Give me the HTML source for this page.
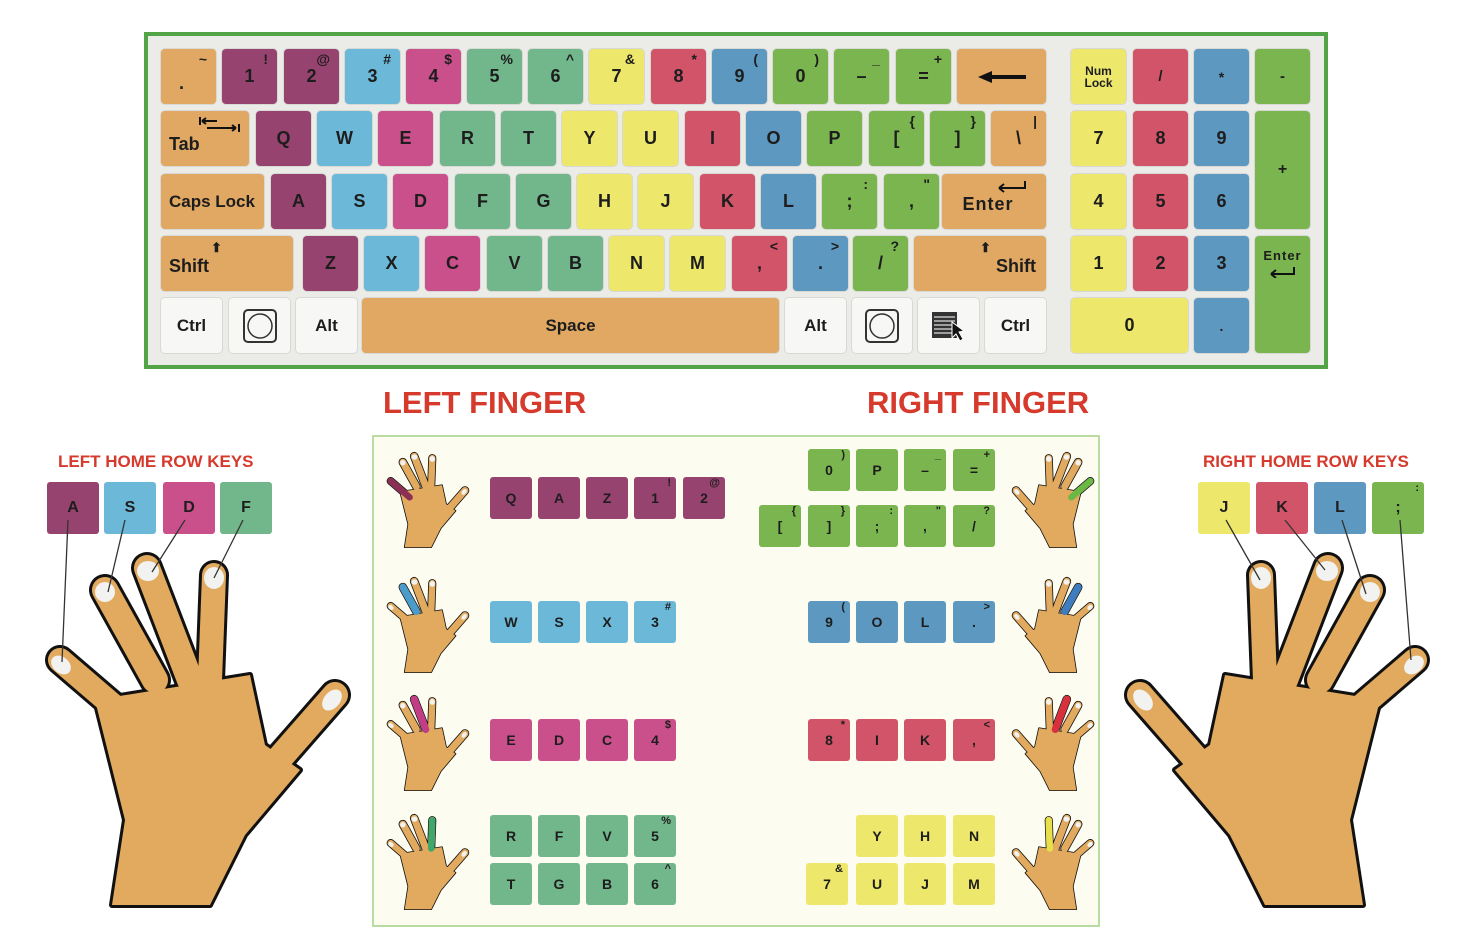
<!DOCTYPE html>
<html><head><meta charset="utf-8"><style>
*{margin:0;padding:0;box-sizing:border-box}
body{width:1458px;height:936px;background:#fff;position:relative;overflow:hidden;font-family:"Liberation Sans",sans-serif}
.kb{position:absolute;left:144px;top:32px;width:1184px;height:337px;background:#ebebe8;border:4px solid #52a447}
.k{position:absolute;width:55px;height:55px;border-radius:4px;display:flex;align-items:center;justify-content:center;font-weight:bold;font-size:18px;color:#1d1d1d;box-shadow:0 0 0 1px rgba(0,0,0,.08)}
.k .s{position:absolute;top:2px;right:9px;font-size:14px}
.p{position:absolute;width:42px;height:42px;border-radius:3px;display:flex;align-items:center;justify-content:center;font-weight:bold;font-size:14px;color:#1d1d1d}
.p .s{position:absolute;top:0;right:5px;font-size:11px}
.o{background:#e0a862}.pu{background:#974370}.b{background:#6cb8d8}.pk{background:#c9508a}.t{background:#72b68b}.y{background:#ede76c}.r{background:#d15468}.db{background:#5d98c0}.g{background:#7ab550}.w{background:#f7f7f5}
.ttl{position:absolute;color:#d63a2c;font-weight:bold}
.panel{position:absolute;left:372px;top:435px;width:728px;height:492px;background:#fdfcf0;border:2px solid #b9dca3}
</style></head><body>
<div class="kb"></div>
<!-- row1 y49 -->
<div class="k o" style="left:161px;top:49px"><span style="margin-top:14px;margin-right:14px">.</span><span class="s">~</span></div>
<div class="k pu" style="left:222px;top:49px"><span>1</span><span class="s">!</span></div>
<div class="k pu" style="left:284px;top:49px"><span>2</span><span class="s">@</span></div>
<div class="k b" style="left:345px;top:49px"><span>3</span><span class="s">#</span></div>
<div class="k pk" style="left:406px;top:49px"><span>4</span><span class="s">$</span></div>
<div class="k t" style="left:467px;top:49px"><span>5</span><span class="s">%</span></div>
<div class="k t" style="left:528px;top:49px"><span>6</span><span class="s">^</span></div>
<div class="k y" style="left:589px;top:49px"><span>7</span><span class="s">&amp;</span></div>
<div class="k r" style="left:651px;top:49px"><span>8</span><span class="s">*</span></div>
<div class="k db" style="left:712px;top:49px"><span>9</span><span class="s">(</span></div>
<div class="k g" style="left:773px;top:49px"><span>0</span><span class="s">)</span></div>
<div class="k g" style="left:834px;top:49px"><span>–</span><span class="s">_</span></div>
<div class="k g" style="left:896px;top:49px"><span>=</span><span class="s">+</span></div>
<div class="k o" style="left:957px;top:49px;width:89px"><svg width="52" height="16"><path d="M14 8H50" stroke="#111" stroke-width="4"/><path d="M2 8L16 2V14Z" fill="#111"/></svg></div>
<!-- row2 y111 -->
<div class="k o" style="left:161px;top:111px;width:88px;justify-content:flex-start;padding-left:8px"><span style="margin-top:12px">Tab</span><svg style="position:absolute;left:36px;top:5px" width="44" height="18"><path d="M3 1V9M5 5H20M5 5L9 2M5 5L9 8M10 12H39M39 12L35 9M39 12L35 15M42 8V16" stroke="#111" stroke-width="2" fill="none"/></svg></div>
<div class="k pu" style="left:256px;top:111px">Q</div>
<div class="k b" style="left:317px;top:111px">W</div>
<div class="k pk" style="left:378px;top:111px">E</div>
<div class="k t" style="left:440px;top:111px">R</div>
<div class="k t" style="left:501px;top:111px">T</div>
<div class="k y" style="left:562px;top:111px">Y</div>
<div class="k y" style="left:623px;top:111px">U</div>
<div class="k r" style="left:685px;top:111px">I</div>
<div class="k db" style="left:746px;top:111px">O</div>
<div class="k g" style="left:807px;top:111px">P</div>
<div class="k g" style="left:869px;top:111px"><span>[</span><span class="s">{</span></div>
<div class="k g" style="left:930px;top:111px"><span>]</span><span class="s">}</span></div>
<div class="k o" style="left:991px;top:111px"><span>\</span><span class="s">|</span></div>
<!-- row3 y174 -->
<div class="k o" style="left:161px;top:174px;width:103px;justify-content:flex-start;padding-left:8px;font-size:17px">Caps Lock</div>
<div class="k pu" style="left:271px;top:174px">A</div>
<div class="k b" style="left:332px;top:174px">S</div>
<div class="k pk" style="left:393px;top:174px">D</div>
<div class="k t" style="left:455px;top:174px">F</div>
<div class="k t" style="left:516px;top:174px">G</div>
<div class="k y" style="left:577px;top:174px">H</div>
<div class="k y" style="left:638px;top:174px">J</div>
<div class="k r" style="left:700px;top:174px">K</div>
<div class="k db" style="left:761px;top:174px">L</div>
<div class="k g" style="left:822px;top:174px"><span>;</span><span class="s">:</span></div>
<div class="k g" style="left:884px;top:174px"><span>,</span><span class="s">"</span></div>
<div class="k o" style="left:942px;top:174px;width:104px"><span style="margin-top:6px;margin-left:-12px;letter-spacing:1px">Enter</span><svg style="position:absolute;left:52px;top:6px" width="34" height="14"><path d="M31 1V8H5M5 8L10 4M5 8L10 12" stroke="#111" stroke-width="2" fill="none"/></svg></div>
<!-- row4 y236 -->
<div class="k o" style="left:161px;top:236px;width:132px;justify-content:flex-start;padding-left:8px"><span style="margin-top:6px">Shift</span><span style="position:absolute;left:50px;top:4px;font-size:13px">⬆</span></div>
<div class="k pu" style="left:303px;top:236px">Z</div>
<div class="k b" style="left:364px;top:236px">X</div>
<div class="k pk" style="left:425px;top:236px">C</div>
<div class="k t" style="left:487px;top:236px">V</div>
<div class="k t" style="left:548px;top:236px">B</div>
<div class="k y" style="left:609px;top:236px">N</div>
<div class="k y" style="left:670px;top:236px">M</div>
<div class="k r" style="left:732px;top:236px"><span>,</span><span class="s">&lt;</span></div>
<div class="k db" style="left:793px;top:236px"><span>.</span><span class="s">&gt;</span></div>
<div class="k g" style="left:853px;top:236px"><span>/</span><span class="s">?</span></div>
<div class="k o" style="left:914px;top:236px;width:132px;justify-content:flex-end;padding-right:10px"><span style="margin-top:6px">Shift</span><span style="position:absolute;left:66px;top:4px;font-size:13px">⬆</span></div>
<!-- row5 y298 -->
<div class="k w" style="left:161px;top:298px;width:61px;font-size:17px">Ctrl</div>
<div class="k w" style="left:229px;top:298px;width:61px"><svg width="36" height="36"><rect x="2" y="2" width="32" height="32" rx="4" fill="none" stroke="#333" stroke-width="2"/><circle cx="18" cy="18" r="12" fill="none" stroke="#333" stroke-width="1.5"/></svg></div>
<div class="k w" style="left:296px;top:298px;width:61px;font-size:17px">Alt</div>
<div class="k o" style="left:362px;top:298px;width:417px;font-size:17px">Space</div>
<div class="k w" style="left:785px;top:298px;width:61px;font-size:17px">Alt</div>
<div class="k w" style="left:852px;top:298px;width:60px"><svg width="36" height="36"><rect x="2" y="2" width="32" height="32" rx="4" fill="none" stroke="#333" stroke-width="2"/><circle cx="18" cy="18" r="12" fill="none" stroke="#333" stroke-width="1.5"/></svg></div>
<div class="k w" style="left:918px;top:298px;width:61px"><svg width="38" height="32"><rect x="2" y="2" width="25" height="26" fill="#333"/><path d="M4 7H25M4 11H25M4 15H25M4 19H25M4 23H25" stroke="#ddd" stroke-width="1.2"/><path d="M22 12L22 28L26 24L30 31L33 29L29 22L34 21Z" fill="#111" stroke="#fff" stroke-width="1"/></svg></div>
<div class="k w" style="left:985px;top:298px;width:61px;font-size:17px">Ctrl</div>
<!-- numpad -->
<div class="k y" style="left:1071px;top:49px;font-size:12px;line-height:12px;text-align:center">Num<br>Lock</div>
<div class="k r" style="left:1133px;top:49px;font-size:15px">/</div>
<div class="k db" style="left:1194px;top:49px;font-size:14px">*</div>
<div class="k g" style="left:1255px;top:49px;font-size:15px">-</div>
<div class="k y" style="left:1071px;top:111px">7</div>
<div class="k r" style="left:1133px;top:111px">8</div>
<div class="k db" style="left:1194px;top:111px">9</div>
<div class="k g" style="left:1255px;top:111px;height:118px;font-size:16px">+</div>
<div class="k y" style="left:1071px;top:174px">4</div>
<div class="k r" style="left:1133px;top:174px">5</div>
<div class="k db" style="left:1194px;top:174px">6</div>
<div class="k y" style="left:1071px;top:236px">1</div>
<div class="k r" style="left:1133px;top:236px">2</div>
<div class="k db" style="left:1194px;top:236px">3</div>
<div class="k g" style="left:1255px;top:236px;height:117px;align-items:flex-start;padding-top:12px;font-size:13px;letter-spacing:1px">Enter<svg style="position:absolute;left:12px;top:30px" width="30" height="12"><path d="M27 1V8H4M4 8L9 4M4 8L9 12" stroke="#111" stroke-width="2" fill="none"/></svg></div>
<div class="k y" style="left:1071px;top:298px;width:117px">0</div>
<div class="k db" style="left:1194px;top:298px;font-size:14px">.</div>

<div class="ttl" style="left:383px;top:385px;font-size:31px">LEFT FINGER</div>
<div class="ttl" style="left:867px;top:385px;font-size:31px">RIGHT FINGER</div>
<div class="ttl" style="left:58px;top:452px;font-size:17px">LEFT HOME ROW KEYS</div>
<div class="ttl" style="left:1203px;top:452px;font-size:17px">RIGHT HOME ROW KEYS</div>

<div class="panel"></div>
<!-- left groups -->
<div class="p pu" style="left:490px;top:477px">Q</div>
<div class="p pu" style="left:538px;top:477px">A</div>
<div class="p pu" style="left:586px;top:477px">Z</div>
<div class="p pu" style="left:634px;top:477px"><span>1</span><span class="s">!</span></div>
<div class="p pu" style="left:683px;top:477px"><span>2</span><span class="s">@</span></div>
<div class="p b" style="left:490px;top:601px">W</div>
<div class="p b" style="left:538px;top:601px">S</div>
<div class="p b" style="left:586px;top:601px">X</div>
<div class="p b" style="left:634px;top:601px"><span>3</span><span class="s">#</span></div>
<div class="p pk" style="left:490px;top:719px">E</div>
<div class="p pk" style="left:538px;top:719px">D</div>
<div class="p pk" style="left:586px;top:719px">C</div>
<div class="p pk" style="left:634px;top:719px"><span>4</span><span class="s">$</span></div>
<div class="p t" style="left:490px;top:815px">R</div>
<div class="p t" style="left:538px;top:815px">F</div>
<div class="p t" style="left:586px;top:815px">V</div>
<div class="p t" style="left:634px;top:815px"><span>5</span><span class="s">%</span></div>
<div class="p t" style="left:490px;top:863px">T</div>
<div class="p t" style="left:538px;top:863px">G</div>
<div class="p t" style="left:586px;top:863px">B</div>
<div class="p t" style="left:634px;top:863px"><span>6</span><span class="s">^</span></div>
<!-- right groups -->
<div class="p g" style="left:808px;top:449px"><span>0</span><span class="s">)</span></div>
<div class="p g" style="left:856px;top:449px">P</div>
<div class="p g" style="left:904px;top:449px"><span>–</span><span class="s">_</span></div>
<div class="p g" style="left:953px;top:449px"><span>=</span><span class="s">+</span></div>
<div class="p g" style="left:759px;top:505px"><span>[</span><span class="s">{</span></div>
<div class="p g" style="left:808px;top:505px"><span>]</span><span class="s">}</span></div>
<div class="p g" style="left:856px;top:505px"><span>;</span><span class="s">:</span></div>
<div class="p g" style="left:904px;top:505px"><span>,</span><span class="s">"</span></div>
<div class="p g" style="left:953px;top:505px"><span>/</span><span class="s">?</span></div>
<div class="p db" style="left:808px;top:601px"><span>9</span><span class="s">(</span></div>
<div class="p db" style="left:856px;top:601px">O</div>
<div class="p db" style="left:904px;top:601px">L</div>
<div class="p db" style="left:953px;top:601px"><span>.</span><span class="s">&gt;</span></div>
<div class="p r" style="left:808px;top:719px"><span>8</span><span class="s">*</span></div>
<div class="p r" style="left:856px;top:719px">I</div>
<div class="p r" style="left:904px;top:719px">K</div>
<div class="p r" style="left:953px;top:719px"><span>,</span><span class="s">&lt;</span></div>
<div class="p y" style="left:856px;top:815px">Y</div>
<div class="p y" style="left:904px;top:815px">H</div>
<div class="p y" style="left:953px;top:815px">N</div>
<div class="p y" style="left:806px;top:863px"><span>7</span><span class="s">&amp;</span></div>
<div class="p y" style="left:856px;top:863px">U</div>
<div class="p y" style="left:904px;top:863px">J</div>
<div class="p y" style="left:953px;top:863px">M</div>

<!-- home keys -->
<div class="p pu" style="left:47px;top:482px;width:52px;height:52px;font-size:16px">A</div>
<div class="p b" style="left:104px;top:482px;width:52px;height:52px;font-size:16px">S</div>
<div class="p pk" style="left:163px;top:482px;width:52px;height:52px;font-size:16px">D</div>
<div class="p t" style="left:220px;top:482px;width:52px;height:52px;font-size:16px">F</div>
<div class="p y" style="left:1198px;top:482px;width:52px;height:52px;font-size:16px">J</div>
<div class="p r" style="left:1256px;top:482px;width:52px;height:52px;font-size:16px">K</div>
<div class="p db" style="left:1314px;top:482px;width:52px;height:52px;font-size:16px">L</div>
<div class="p g" style="left:1372px;top:482px;width:52px;height:52px;font-size:16px"><span>;</span><span class="s">:</span></div>

<svg style="position:absolute;left:0;top:0" width="1458" height="936">
<defs>
<g id="hand">
 <g stroke="#111" stroke-linecap="round" fill="#111">
  <path d="M10,130L80,190" stroke-width="30"/>
  <path d="M55,60L105,150" stroke-width="32"/>
  <path d="M97,38L140,150" stroke-width="32"/>
  <path d="M164,45L160,150" stroke-width="30"/>
  <path d="M285,165L215,245" stroke-width="32"/>
  <path d="M45,170L200,145L215,215L250,240L195,305L160,375L62,375L75,290Z" stroke-width="6" stroke-linejoin="round"/>
 </g>
 <g stroke="#e2aa5e" stroke-linecap="round" fill="#e2aa5e">
  <path d="M10,130L80,190" stroke-width="24"/>
  <path d="M55,60L105,150" stroke-width="26"/>
  <path d="M97,38L140,150" stroke-width="26"/>
  <path d="M164,45L160,150" stroke-width="24"/>
  <path d="M285,165L215,245" stroke-width="26"/>
  <path d="M45,170L200,145L215,215L250,240L195,305L160,375L62,375L75,290Z" stroke-width="0"/>
 </g>
 <g fill="#f2f2f0">
  <ellipse cx="11" cy="135" rx="8" ry="11" transform="rotate(-50 11 135)"/>
  <ellipse cx="55" cy="62" rx="10" ry="10"/>
  <ellipse cx="98" cy="41" rx="11" ry="10"/>
  <ellipse cx="164" cy="48" rx="10" ry="11"/>
  <ellipse cx="282" cy="170" rx="8" ry="12" transform="rotate(40 282 170)"/>
 </g>
</g>
</defs>
<use href="#hand" transform="translate(50,530)"/>
<use href="#hand" transform="translate(1425,530) scale(-1,1)"/>
<g stroke="#333" stroke-width="1.3">
 <path d="M68,520L62,662M125,520L108,592M185,520L152,572M243,520L214,578"/>
 <path d="M1226,520L1260,580M1285,520L1325,570M1342,520L1366,594M1400,520L1411,660"/>
</g>
<!-- small hands -->
<g transform="translate(388,446) scale(0.27)"><use href="#hand"/><path d="M10,130L80,190" stroke="#8c2f55" stroke-width="24" stroke-linecap="round"/></g>
<g transform="translate(388,571) scale(0.27)"><use href="#hand"/><path d="M55,60L105,150" stroke="#4a9ccc" stroke-width="26" stroke-linecap="round"/></g>
<g transform="translate(388,689) scale(0.27)"><use href="#hand"/><path d="M97,38L140,150" stroke="#c23d86" stroke-width="26" stroke-linecap="round"/></g>
<g transform="translate(388,808) scale(0.27)"><use href="#hand"/><path d="M164,45L160,150" stroke="#3fa76a" stroke-width="24" stroke-linecap="round"/></g>
<g transform="translate(1093,446) scale(-0.27,0.27)"><use href="#hand"/><path d="M10,130L80,190" stroke="#6bb845" stroke-width="24" stroke-linecap="round"/></g>
<g transform="translate(1093,571) scale(-0.27,0.27)"><use href="#hand"/><path d="M55,60L105,150" stroke="#3d7dc0" stroke-width="26" stroke-linecap="round"/></g>
<g transform="translate(1093,689) scale(-0.27,0.27)"><use href="#hand"/><path d="M97,38L140,150" stroke="#d8303d" stroke-width="26" stroke-linecap="round"/></g>
<g transform="translate(1093,808) scale(-0.27,0.27)"><use href="#hand"/><path d="M164,45L160,150" stroke="#e8e04a" stroke-width="24" stroke-linecap="round"/></g>
</svg>
</body></html>
